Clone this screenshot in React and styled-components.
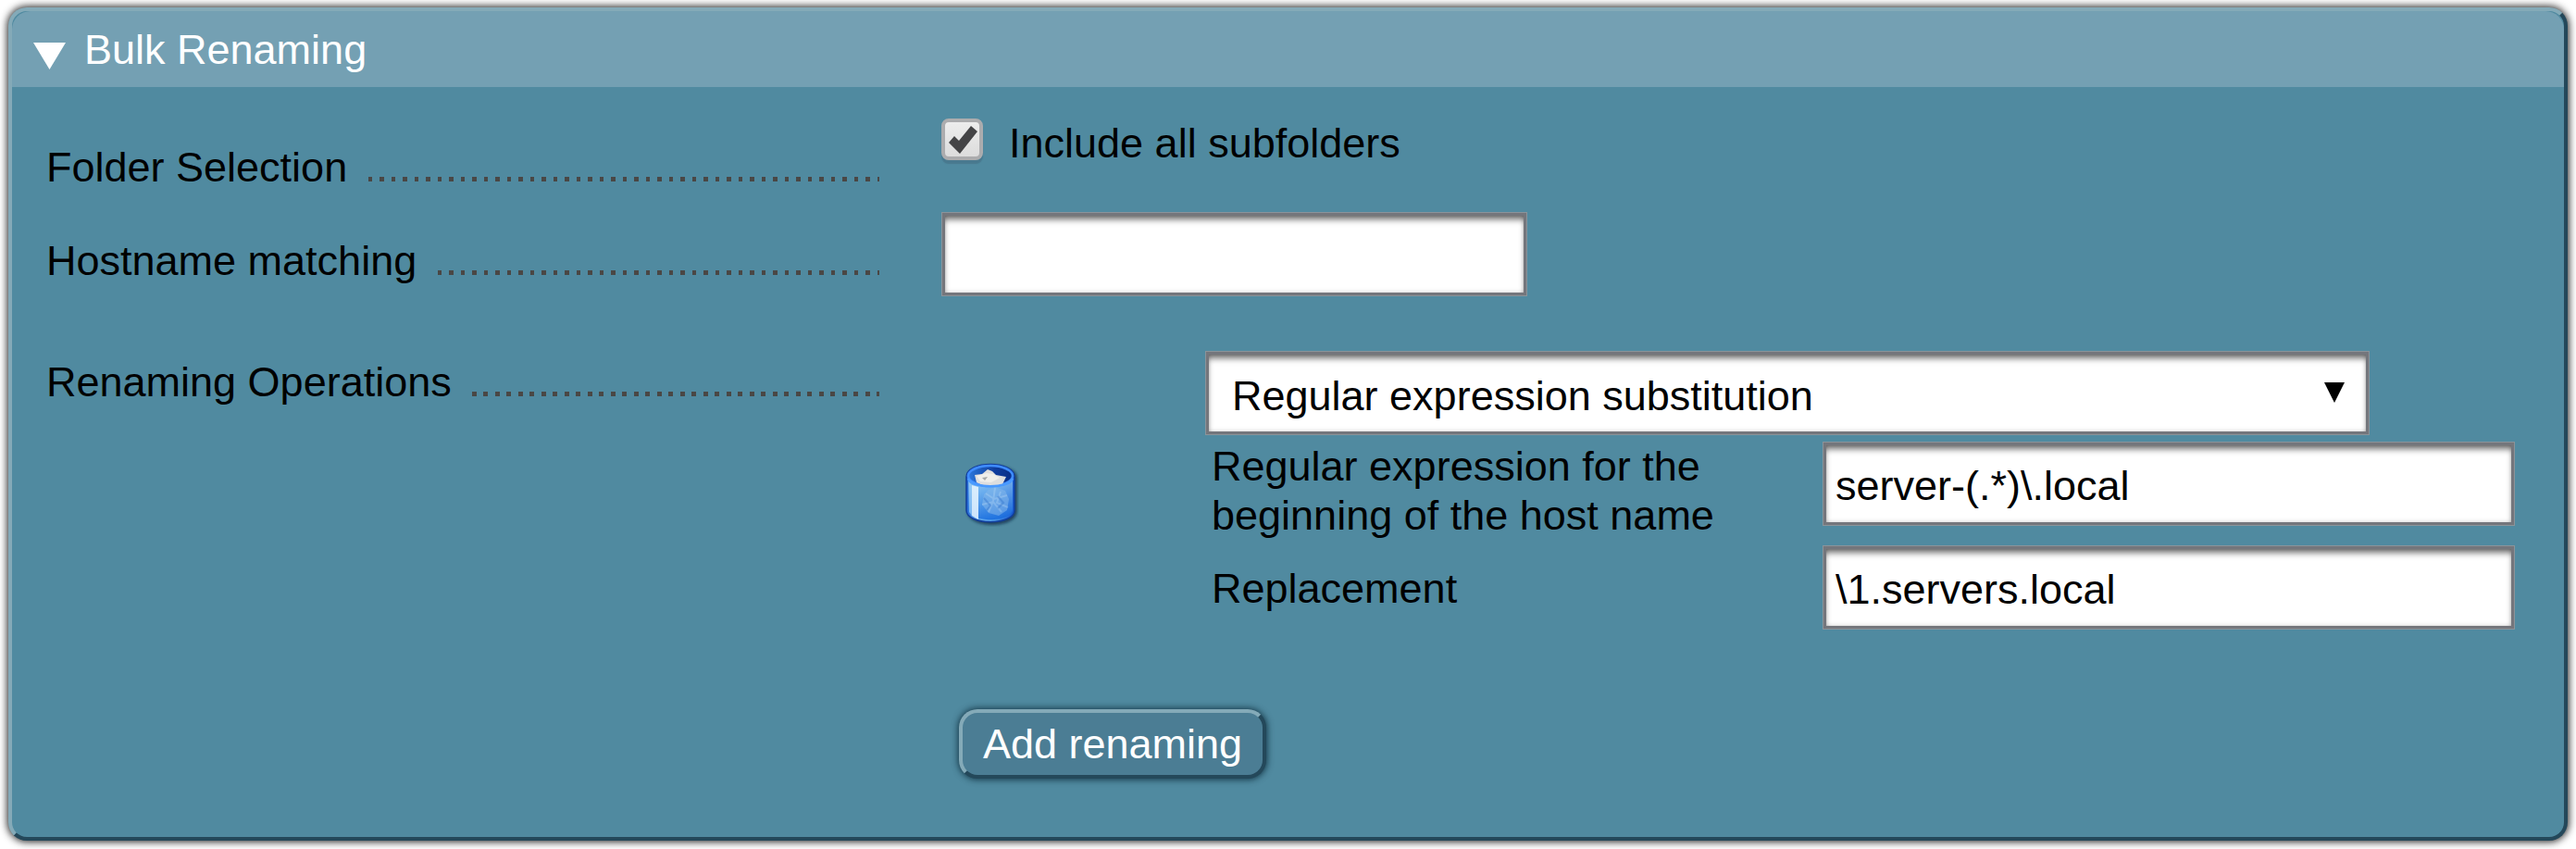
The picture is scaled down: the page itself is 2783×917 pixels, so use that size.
import React from "react";
import styled, { createGlobalStyle, css } from "styled-components";

const GlobalStyle = createGlobalStyle`
  *, *::before, *::after { box-sizing: border-box; }
  body { margin: 0; background: #fff; overflow: hidden; }
  body, input, button {
    font-family: "Liberation Sans", Arial, sans-serif;
    font-size: 45px;
    line-height: 53px;
    color: #000;
  }
`;

const Page = styled.main`
  padding: 8px 9px 9px;
  height: 917px;
`;

const bevel = css`
  border: 4px solid;
  border-color: #84aab8 #24485a #24485a #84aab8;
`;

const Panel = styled.section`
  ${bevel}
  height: 900px;
  border-radius: 20px;
  background: #508aa0;
  box-shadow: 0 0 8px 1px rgba(0, 0, 0, 0.9);
`;

const Header = styled.header`
  display: flex;
  align-items: center;
  gap: 20px;
  height: 82px;
  padding: 0 0 0 23px;
  border-radius: 20px 20px 0 0;
  background: #74a0b3;
`;

const HeaderArrow = styled.svg`
  width: 35px;
  height: 29px;
  margin-top: 14px;
`;

const Title = styled.h1`
  margin: 0;
  font: inherit;
  color: #fff;
`;

const Row = styled.div`
  display: grid;
  grid-template-columns: 967px 1fr;
  height: ${(p) => p.$height}px;
  padding-left: 37px;
`;

const RowLabel = styled.div`
  display: flex;
  align-items: flex-start;
  width: 900px;
  height: ${(p) => p.$offset + 53}px;
  padding-top: ${(p) => p.$offset}px;
  white-space: nowrap;
`;

/* Dots are counted from the right edge so that they line up across rows. */
const Leader = styled.span`
  flex: 1;
  height: 5px;
  margin: 37px 0 0 19px;
  background: repeating-linear-gradient(
    to left,
    #4a4745 0 2.5px,
    transparent 2.5px 10.3px,
    #4a4745 10.3px 12.5px
  );
`;

const CheckLabel = styled.label`
  display: flex;
  align-items: flex-start;
  gap: 28px;
  padding-top: 34px;
`;

const Checkbox = styled.span`
  display: flex;
  align-items: center;
  justify-content: center;
  width: 45px;
  height: 45px;
  border: 4px solid #acacae;
  border-radius: 8px;
  background: linear-gradient(#ededed, #dcdcdc);
  box-shadow: 0 4px 1px rgba(50, 70, 90, 0.25);
`;

const frame = css`
  height: 91px;
  border: 1px solid #8b949a;
  outline: 3px solid #74767c;
  outline-offset: -4px;
  background: #fff;
  box-shadow: inset 0 7px 7px rgba(0, 0, 0, 0.55), inset 0 0 7px rgba(0, 0, 0, 0.55);
`;

const TextInput = styled.input`
  ${frame}
  display: block;
  width: ${(p) => p.$width}px;
  margin: 0;
  padding: 5px 13px 0;
  border-radius: 0;
`;

const Select = styled.div`
  ${frame}
  display: flex;
  align-items: center;
  justify-content: space-between;
  width: 1258px;
  padding: 5px 26px 0 28px;
`;

const SelectArrow = styled.svg`
  width: 22px;
  height: 22px;
  margin-top: -6px;
`;

const Operation = styled.div`
  display: grid;
  grid-template-columns: 285px 1fr;
`;

const DeleteCell = styled.div`
  padding: 120px 0 0 24px;
`;

const TrashSvg = styled.svg`
  display: block;
  width: 60px;
  height: 70px;
`;

const FieldTable = styled.div`
  display: grid;
  grid-template-columns: 660px 748px;
  grid-template-rows: 112px 91px;
  margin-top: 7px;
  padding-left: 7px;
`;

const FieldName = styled.div`
  width: 570px;
  padding-top: ${(p) => p.$offset}px;
`;

const AddButton = styled.button`
  ${bevel}
  display: block;
  width: 332px;
  height: 75px;
  margin: 86px 0 0 19px;
  padding: 0;
  border-radius: 20px;
  background: #4b7d94;
  color: #fff;
  box-shadow: 0 0 7px 1px rgba(10, 40, 55, 0.85);
`;

function SettingRow({ label, offset, height, children }) {
  return (
    <Row $height={height}>
      <RowLabel $offset={offset}>
        <span>{label}</span>
        <Leader />
      </RowLabel>
      <div>{children}</div>
    </Row>
  );
}

function TrashIcon() {
  return (
    <TrashSvg viewBox="0 0 60 70">
      <defs>
        <linearGradient id="can" x1="0" x2="1" y1="0" y2="0">
          <stop offset="0" stopColor="#1f62d2" />
          <stop offset="0.2" stopColor="#6ab0f0" />
          <stop offset="0.6" stopColor="#4794e6" />
          <stop offset="1" stopColor="#1456cf" />
        </linearGradient>
        <linearGradient id="shade" x1="0" x2="0" y1="0" y2="1">
          <stop offset="0" stopColor="#9cd2f6" stopOpacity="0.65" />
          <stop offset="1" stopColor="#0b62dc" stopOpacity="0.7" />
        </linearGradient>
        <linearGradient id="inner" x1="0" x2="1" y1="0" y2="0">
          <stop offset="0" stopColor="#2c78dc" />
          <stop offset="0.6" stopColor="#0e3c9c" />
          <stop offset="1" stopColor="#0b2f86" />
        </linearGradient>
        <filter id="soft" x="-20%" y="-20%" width="140%" height="140%">
          <feGaussianBlur stdDeviation="1.6" />
        </filter>
      </defs>
      <path d="M4 17C4 -1 58 -1 58 17V53C58 73 4 73 4 53Z" fill="#0b2746" opacity="0.7" filter="url(#soft)" />
      <path d="M3 16C3 -2 55 -2 55 16V52C55 69 3 69 3 52Z" fill="url(#can)" stroke="#123f9d" strokeWidth="1.5" />
      <path d="M5 20C10 29 48 29 53 20V51C52 66 6 66 5 51Z" fill="url(#shade)" />
      <ellipse cx="29" cy="15" rx="24" ry="11" fill="url(#inner)" stroke="#3f8cff" strokeWidth="2.6" />
      <path d="M12 14L20 13L26 8L31 10L35 14L46 16L42 24C33 27 20 26 14 22Z" fill="#dedede" />
      <path d="M14 15L25 12L32 13L39 17L30 22L18 21Z" fill="#efeeea" />
      <path d="M20 17L26 16L23 20Z" fill="#a7a9a8" />
      <path d="M5 18C9 29 49 29 53 18" fill="none" stroke="#4a9aff" strokeWidth="2.6" />
      <path d="M9 25L16 27V62L9 58Z" fill="#eaf7ff" opacity="0.85" />
      <path d="M6 22L9 25V58L6 54Z" fill="#9ed3fa" opacity="0.7" />
      <path d="M27 30L34 27L45 31L49 40L47 52L38 58L27 55L20 46L22 35Z" fill="#83b7ea" opacity="0.55" />
      <path d="M24 34L33 40L47 36M20 46L32 43L41 54M34 28L32 42L27 54M40 32L36 44L48 49" fill="none" stroke="#d0e8fb" strokeWidth="2" opacity="0.25" />
      <path d="M22 39L29 47L25 52M37 37L43 44L37 50" fill="none" stroke="#2f71ca" strokeWidth="2" opacity="0.4" />
    </TrashSvg>
  );
}

export default function App() {
  return (
    <>
      <GlobalStyle />
      <Page>
        <Panel>
          <Header>
            <HeaderArrow viewBox="0 0 35 29">
              <path d="M0 0H35L17.5 29Z" fill="#fff" />
            </HeaderArrow>
            <Title>Bulk Renaming</Title>
          </Header>
          <SettingRow label="Folder Selection" offset={60} height={135}>
            <CheckLabel>
              <Checkbox role="checkbox" aria-checked="true">
                <svg width="32" height="32" viewBox="0 0 32 32">
                  <path d="M1 19L7 12L12 17L25 1L32 7L13 31Z" fill="#444446" />
                </svg>
              </Checkbox>
              <span>Include all subfolders</span>
            </CheckLabel>
          </SettingRow>
          <SettingRow label="Hostname matching" offset={26} height={150}>
            <TextInput $width={633} aria-label="Hostname matching" />
          </SettingRow>
          <SettingRow label="Renaming Operations" offset={7} height={500}>
            <Operation>
              <DeleteCell>
                <TrashIcon />
              </DeleteCell>
              <div>
                <Select>
                  <span>Regular expression substitution</span>
                  <SelectArrow viewBox="0 0 22 22">
                    <path d="M0 0H22L11 22Z" fill="#000" />
                  </SelectArrow>
                </Select>
                <FieldTable>
                  <FieldName $offset={0}>
                    Regular expression for the beginning of the host name
                  </FieldName>
                  <TextInput $width={748} defaultValue="server-(.*)\.local" />
                  <FieldName $offset={20}>Replacement</FieldName>
                  <TextInput $width={748} defaultValue="\1.servers.local" />
                </FieldTable>
              </div>
            </Operation>
            <AddButton>Add renaming</AddButton>
          </SettingRow>
        </Panel>
      </Page>
    </>
  );
}
